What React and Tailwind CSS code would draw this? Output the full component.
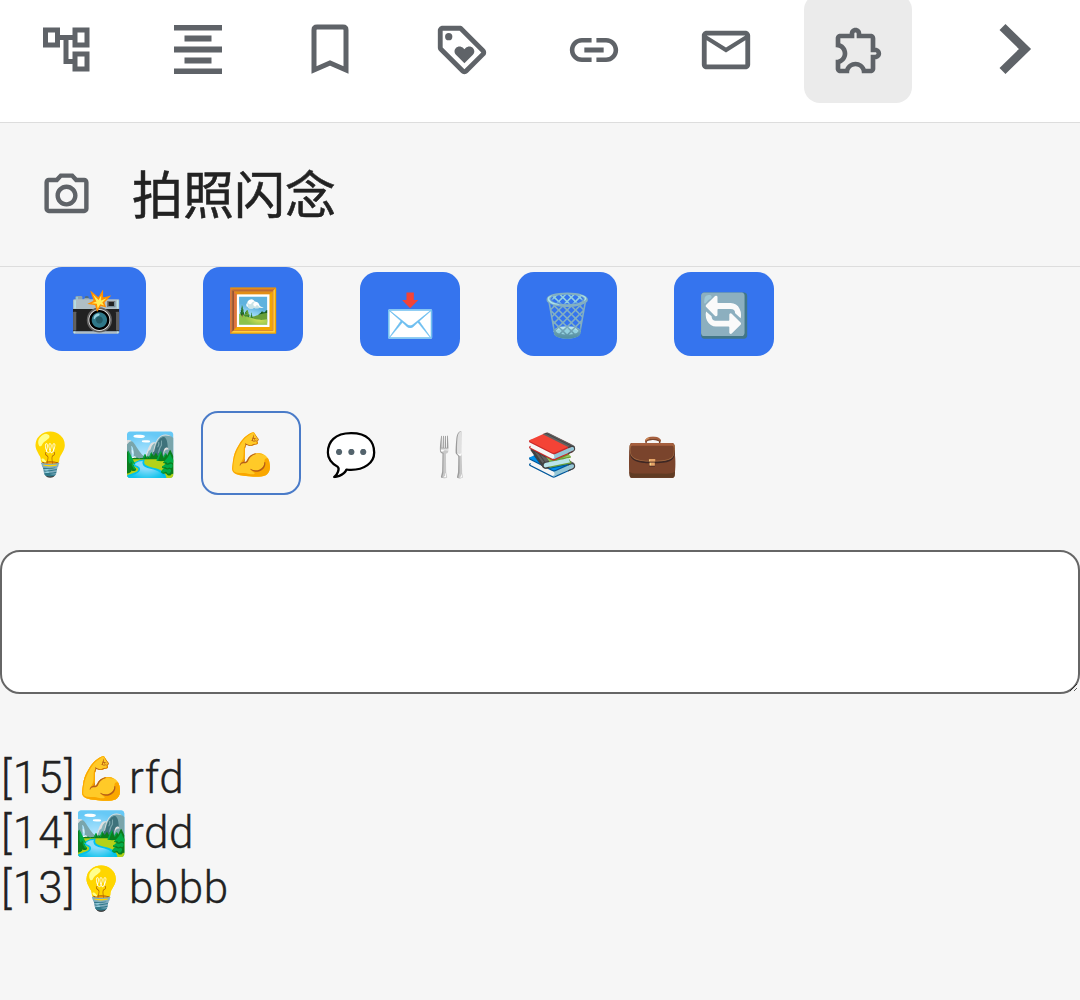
const iconColor = "#5f6368";

const Tool = ({ active, className = "", children }) => (
  <div className={`w-[108px] h-[109px] mx-3 -mt-[6px] flex items-center justify-center ${active ? "rounded-[16px] bg-[#ebebeb]" : ""} ${className}`}>
    {children}
  </div>
);

const actions = [
  { emoji: "📸", className: "w-[101px] mt-0" },
  { emoji: "🖼️", className: "w-[100px] mt-0" },
  { emoji: "📩", className: "w-[100px] mt-[5px]" },
  { emoji: "🗑️", className: "w-[100px] mt-[5px]" },
  { emoji: "🔄", className: "w-[100px] mt-[5px]" },
];

const moods = ["💡", "🏞️", "💪", "💬", "🍴", "📚", "💼"];

const notes = [
  { id: 15, emoji: "💪", text: "rfd" },
  { id: 14, emoji: "🏞️", text: "rdd" },
  { id: 13, emoji: "💡", text: "bbbb" },
];

export default function App() {
  return (
    <div className="min-h-[1000px] bg-[#f6f6f6] overflow-hidden font-['Roboto','Noto_Sans_CJK_SC','Noto_Color_Emoji',sans-serif] text-[#222222]">
      <div className="h-[123px] bg-white border-b border-[#dddddd] flex overflow-hidden">
        <Tool>
          <svg width="60" height="60" viewBox="36 20 60 60" fill="none" stroke={iconColor} strokeWidth="5">
            <rect x="45.5" y="31" width="12" height="15" />
            <rect x="75" y="31" width="12" height="15" />
            <rect x="75" y="55" width="12" height="15" />
            <path d="M57 38.5h18M66 38.5v24h9" />
          </svg>
        </Tool>
        <Tool>
          <svg width="60" height="60" viewBox="168 20 60 60" fill={iconColor}>
            <rect x="174" y="26" width="48" height="5.5" />
            <rect x="184.5" y="36.5" width="27" height="6" />
            <rect x="174" y="47.5" width="48" height="6" />
            <rect x="184.5" y="58.5" width="27" height="6" />
            <rect x="174" y="69.5" width="48" height="5.5" />
          </svg>
        </Tool>
        <Tool>
          <svg width="60" height="60" viewBox="300 20 60 60" fill="none" stroke={iconColor} strokeWidth="5">
            <path d="M314 71V31q0-3 3-3h26q3 0 3 3V71L330 64Z" />
          </svg>
        </Tool>
        <Tool>
          <svg width="58" height="58" viewBox="0 0 24 24" fill={iconColor} className="mt-[3px]">
            <path d="M21.41 11.58l-9-9C12.05 2.22 11.55 2 11 2H4c-1.1 0-2 .9-2 2v7c0 .55.22 1.05.59 1.42l9 9c.36.36.86.58 1.41.58s1.05-.22 1.41-.59l7-7c.37-.36.59-.86.59-1.41s-.23-1.06-.59-1.42zM13 20.01L4 11V4h7v-.01l9 9-7 7.02z" />
            <circle cx="6.5" cy="6.5" r="1.5" />
            <path d="M8.9 12.55c0 .57.23 1.07.6 1.45l3.5 3.5 3.5-3.5c.37-.37.6-.89.6-1.45 0-1.13-.92-2.05-2.05-2.05-.57 0-1.08.23-1.45.6l-.6.6-.6-.59c-.37-.38-.89-.61-1.45-.61-1.13 0-2.05.92-2.05 2.05z" />
          </svg>
        </Tool>
        <Tool>
          <svg width="58" height="58" viewBox="0 0 24 24" fill={iconColor} className="mt-[3px]">
            <path d="M3.9 12c0-1.71 1.39-3.1 3.1-3.1h4V7H7c-2.76 0-5 2.24-5 5s2.24 5 5 5h4v-1.9H7c-1.71 0-3.1-1.39-3.1-3.1zM8 13h8v-2H8v2zm9-6h-4v1.9h4c1.71 0 3.1 1.39 3.1 3.1s-1.39 3.1-3.1 3.1h-4V17h4c2.76 0 5-2.24 5-5s-2.24-5-5-5z" />
          </svg>
        </Tool>
        <Tool>
          <svg width="58" height="58" viewBox="0 0 24 24" fill={iconColor} className="mt-[3px]">
            <path d="M20 4H4c-1.1 0-1.99.9-1.99 2L2 18c0 1.1.9 2 2 2h16c1.1 0 2-.9 2-2V6c0-1.1-.9-2-2-2zm0 14H4V8l8 5 8-5v10zm-8-7L4 6h16l-8 5z" />
          </svg>
        </Tool>
        <Tool active>
          <svg width="56" height="56" viewBox="0 0 24 24" fill={iconColor} className="mt-[3px] ml-[1px]">
            <path d="M10.5 4.5c.28 0 .5.22.5.5v2h6v6h2c.28 0 .5.22.5.5s-.22.5-.5.5h-2v6h-2.12c-.68-1.75-2.39-3-4.38-3s-3.7 1.25-4.38 3H4v-2.12c1.75-.68 3-2.39 3-4.38 0-1.99-1.24-3.7-2.99-4.38L4 7h6V5c0-.28.22-.5.5-.5m0-2C9.12 2.5 8 3.62 8 5H4c-1.1 0-1.99.9-1.99 2v3.8h.29c1.49 0 2.7 1.21 2.7 2.7s-1.21 2.7-2.7 2.7H2V20c0 1.1.9 2 2 2h3.8v-.3c0-1.49 1.21-2.7 2.7-2.7s2.7 1.21 2.7 2.7v.3H17c1.1 0 2-.9 2-2v-4c1.38 0 2.5-1.12 2.5-2.5S20.38 11 19 11V7c0-1.1-.9-2-2-2h-4c0-1.38-1.12-2.5-2.5-2.5z" />
          </svg>
        </Tool>
        <Tool className="ml-[36px]">
          <svg width="60" height="60" viewBox="984 20 60 60" fill="none" stroke={iconColor} strokeWidth="8.5">
            <path d="M1002.5 28l22.5 22-22.5 22" />
          </svg>
        </Tool>
      </div>

      <div className="h-[144px] border-b border-[#dddddd] flex items-center">
        <svg width="53" height="53" viewBox="0 0 24 24" fill={iconColor} className="ml-[40px] mt-[2px]">
          <path d="M14.12 4l1.83 2H20v12H4V6h4.05l1.83-2h4.24M15 2H9L7.17 4H4c-1.1 0-2 .9-2 2v12c0 1.1.9 2 2 2h16c1.1 0 2-.9 2-2V6c0-1.1-.9-2-2-2h-3.17L15 2zm-3 7c1.65 0 3 1.35 3 3s-1.35 3-3 3-3-1.35-3-3 1.35-3 3-3m0-2c-2.76 0-5 2.24-5 5s2.24 5 5 5 5-2.24 5-5-2.24-5-5-5z" />
        </svg>
        <span className="ml-[39px] text-[51px] leading-none -mt-[5px] font-['Noto_Sans_CJK_SC',sans-serif] [-webkit-text-stroke:0.5px_#222222]">拍照闪念</span>
      </div>

      <div className="flex items-start gap-[57px] pl-[45px] h-[144px]">
        {actions.map((a, i) => (
          <div key={i} className={`h-[84px] pt-1 pl-[2px] rounded-[17px] bg-[#3574ee] flex items-center justify-center text-[42px] leading-none ${a.className}`}>
            {a.emoji}
          </div>
        ))}
      </div>

      <div className="flex gap-[0.4px] pl-[0.5px] h-[84px]">
        {moods.map((m, i) => (
          <div key={i} className={`w-[100px] h-[84px] shrink-0 pt-1 flex items-center justify-center text-[42px] leading-none ${i === 2 ? "rounded-[17px] border-2 border-[#4a7bc8]" : ""}`}>
            {m}
          </div>
        ))}
      </div>

      <textarea className="block w-full h-[144px] mt-[55px] bg-white border-2 border-[#666666] rounded-[20px] outline-none" />

      <div className="mt-[57px] pl-[1px] text-[44px] leading-[55px] font-light [-webkit-text-stroke:0.3px_#222222]">
        {notes.map((n) => (
          <div key={n.id}>
            <span className="tracking-[1.2px]">[{n.id}]</span>
            <span className="text-[42px] mr-[1px]">{n.emoji}</span>
            <span className="tracking-[0.5px]">{n.text}</span>
          </div>
        ))}
      </div>
    </div>
  );
}
